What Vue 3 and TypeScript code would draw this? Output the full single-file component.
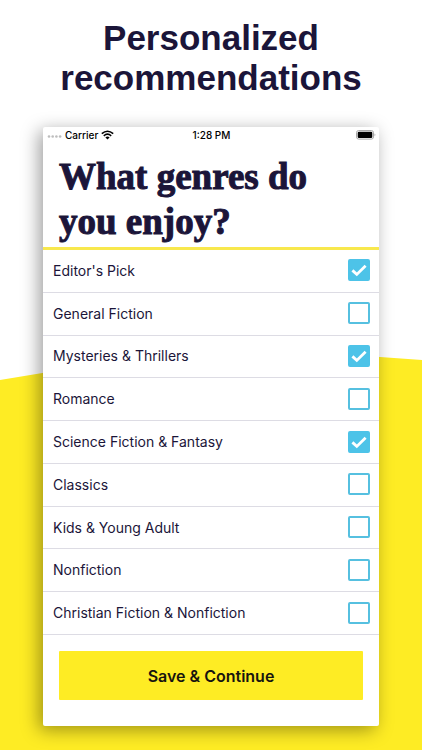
<script setup lang="ts">
import { reactive } from 'vue'

interface Genre {
  id: string
  label: string
  selected: boolean
}

const genres = reactive<Genre[]>([
  { id: 'editors-pick', label: "Editor's Pick", selected: true },
  { id: 'general', label: 'General Fiction', selected: false },
  { id: 'mysteries', label: 'Mysteries & Thrillers', selected: true },
  { id: 'romance', label: 'Romance', selected: false },
  { id: 'scifi', label: 'Science Fiction & Fantasy', selected: true },
  { id: 'classics', label: 'Classics', selected: false },
  { id: 'kids', label: 'Kids & Young Adult', selected: false },
  { id: 'nonfiction', label: 'Nonfiction', selected: false },
  { id: 'christian', label: 'Christian Fiction & Nonfiction', selected: false },
])
</script>

<template>
  <main class="page">
    <svg class="backdrop" viewBox="0 0 422 750" preserveAspectRatio="none" aria-hidden="true">
      <path d="M0 380L212 345L422 360V750H0Z" fill="#feec24" />
    </svg>
    <h1 class="headline">Personalized<br />recommendations</h1>

    <form class="screen" @submit.prevent>
      <div class="status">
        <div class="carrier">
          <svg width="15" height="6" viewBox="0 0 15 6" aria-hidden="true">
            <g fill="#bdbdbd">
              <circle cx="2" cy="4.5" r="1.3" />
              <circle cx="5.7" cy="4.5" r="1.3" />
              <circle cx="9.4" cy="4.5" r="1.3" />
              <circle cx="13.1" cy="4.5" r="1.3" />
            </g>
          </svg>
          <span>Carrier</span>
          <svg width="13" height="10" viewBox="0 0 13 10" aria-hidden="true">
            <path d="M.8 3.7Q6.5-1.2 12.2 3.7M2.8 5.8Q6.5 2.6 10.2 5.8" fill="none" stroke="#000" stroke-width="1.6" />
            <path d="M4.4 7.4Q6.5 5.7 8.6 7.4L6.5 9.5Z" />
          </svg>
        </div>
        <span>1:28 PM</span>
        <svg class="battery" width="20" height="10" viewBox="0 0 20 10" aria-hidden="true">
          <rect x=".5" y=".5" width="17" height="8.6" rx="2.2" fill="#fff" stroke="#a8a8a8" />
          <rect x="1.7" y="1.7" width="14.6" height="6.2" rx="1.2" />
          <path d="M18.6 3.4Q20.2 4.8 18.6 6.2Z" fill="#999" />
        </svg>
      </div>

      <h2 class="question">What genres do you enjoy?</h2>

      <ul class="genres">
        <li v-for="genre in genres" :key="genre.id" class="genre">
          <label class="choice" :for="genre.id">
            <span>{{ genre.label }}</span>
            <span class="tick">
              <input :id="genre.id" v-model="genre.selected" class="box" type="checkbox" />
              <svg v-if="genre.selected" class="mark" viewBox="0 0 22 22" aria-hidden="true">
                <path d="M4.4 11.4L8.8 15.4L17.6 6.8" fill="none" stroke="#fff" stroke-width="2.8" />
              </svg>
            </span>
          </label>
        </li>
      </ul>

      <div class="actions">
        <button class="save" type="submit">Save &amp; Continue</button>
      </div>
    </form>
  </main>
</template>

<style>
body {
  background: #fff;
}
</style>

<style scoped>
.page {
  position: relative;
  isolation: isolate;
  box-sizing: border-box;
  min-height: 100vh;
  display: flex;
  flex-direction: column;
  padding: 18px 43px 24px;
  color: #1b1539;
  font-family: Inter, "Liberation Sans", sans-serif;
}

.backdrop {
  position: absolute;
  z-index: -1;
  inset: 0;
  width: 100%;
  height: 100%;
}

.headline {
  margin: 0 0 29px;
  font: bold 35px/40px "Liberation Sans", sans-serif;
  text-align: center;
}

.screen {
  flex: 1;
  display: flex;
  flex-direction: column;
  border-radius: 2px;
  background: #fff;
  box-shadow: -4px 4px 18px rgba(0, 0, 0, 0.38);
}

.status {
  display: grid;
  grid-template-columns: 1fr auto 1fr;
  align-items: center;
  height: 16px;
  padding: 0 3px 0 4px;
  color: #000;
  font-size: 10px;
  font-weight: 500;
}

.carrier {
  display: flex;
  align-items: center;
  gap: 3px;
}

.battery {
  justify-self: end;
}

.question {
  margin: 0;
  padding: 11px 48px 3px 16px;
  border-bottom: 3px solid #f8e84d;
  font: bold 37px/45px "Liberation Serif", serif;
  -webkit-text-stroke: 1px #1b1539;
}

.genres {
  flex: 1;
  display: flex;
  flex-direction: column;
  margin: 0;
  padding: 0;
  list-style: none;
}

.genre {
  flex: 1;
  display: flex;
  border-bottom: 1px solid #dddce4;
}

.choice {
  flex: 1;
  display: flex;
  align-items: center;
  justify-content: space-between;
  padding: 0 9px 1px 10px;
  font-size: 14px;
}

.tick {
  position: relative;
  display: flex;
}

.box {
  appearance: none;
  box-sizing: border-box;
  width: 22px;
  height: 22px;
  margin: 0;
  border: 2px solid #56c0e0;
  border-radius: 2px;
  background: #fff;
}

.box:checked {
  background: #4dc3e8;
  border-color: #4dc3e8;
}

.mark {
  position: absolute;
  inset: 0;
  pointer-events: none;
}

.actions {
  padding: 16px 16px 26px;
}

.save {
  width: 100%;
  height: 49px;
  border: 0;
  border-radius: 1px;
  background: #feec24;
  color: #17140f;
  font: 600 16px Inter, "Liberation Sans", sans-serif;
}
</style>
